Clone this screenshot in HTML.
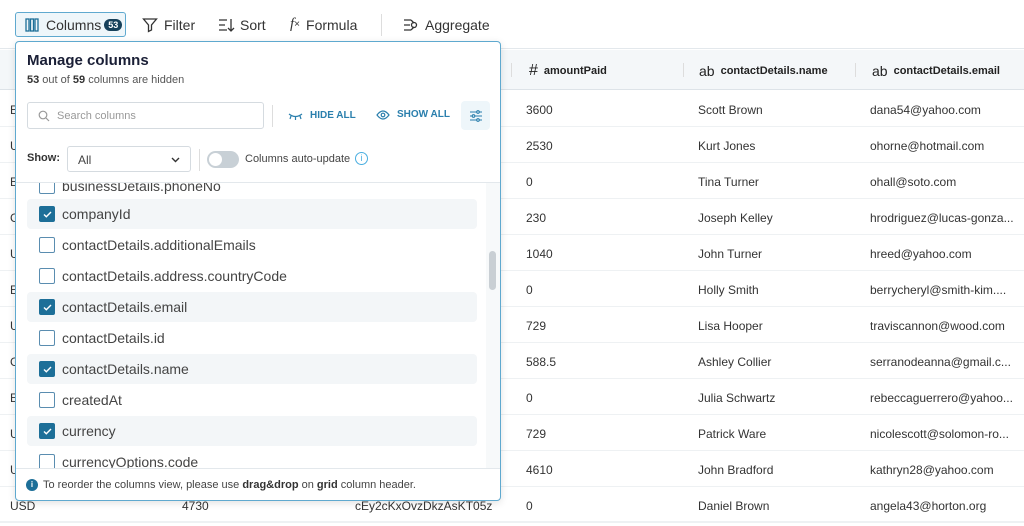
<!DOCTYPE html>
<html><head><meta charset="utf-8"><style>
*{box-sizing:border-box;margin:0;padding:0}
body{width:1024px;height:526px;overflow:hidden;background:#fff;font-family:"Liberation Sans",sans-serif;color:#222;position:relative}
.tb{position:absolute;top:0;left:0;right:0;height:49px;border-bottom:1px solid #e3e8ec}
.tbi{position:absolute;top:12px;height:25px;display:flex;align-items:center;font-size:14px;color:#333}
.hdr{position:absolute;top:50px;left:0;right:0;height:40px;background:#f4f7f9;border-bottom:1px solid #dde3e8}
.hc{position:absolute;top:1px;height:40px;display:flex;align-items:center;font-size:11px;font-weight:bold;color:#222}
.sep{position:absolute;top:13px;width:1px;height:14px;background:#ddd}
.row{position:absolute;left:0;right:0;height:36px;border-bottom:1px solid #eef1f3;font-size:12px;color:#333}
.row span{position:absolute;top:12px}
.pop{position:absolute;left:15px;top:41px;width:486px;height:460px;background:#fff;border:1px solid #5fa9cf;border-radius:4px;box-shadow:0 2px 8px rgba(0,0,0,.12);overflow:hidden}
.it{position:absolute;left:11px;width:450px;height:30px;border-radius:4px;font-size:14px;color:#444;display:flex;align-items:center}
.it.on{background:#f3f6f8}
.cb{width:16px;height:16px;border:1.5px solid #5a8db0;border-radius:2px;margin-left:12px;margin-right:7px;flex:none;display:flex;align-items:center;justify-content:center}
.on .cb{background:#1d6f98;border-color:#1d6f98}
</style></head><body>
<div class="tb">
 <div class="tbi" style="left:15px;width:111px;border:1px solid #5fa9cf;border-radius:3px;background:#eef6fa;padding-left:9px">
  <svg width="14" height="14" viewBox="0 0 14 14" fill="none" stroke="#1d6f98" stroke-width="1.3"><rect x="1" y="1" width="3" height="12"/><rect x="5.5" y="1" width="3" height="12"/><rect x="10" y="1" width="3" height="12"/></svg>
  <span style="margin-left:7px">Columns</span>
  <span style="margin-left:3px;background:#16405a;color:#fff;font-size:9px;border-radius:8px;padding:1px 4px;font-weight:bold">53</span></div>
 <div class="tbi" style="left:142px"><svg width="16" height="16" viewBox="0 0 16 16" fill="none" stroke="#333" stroke-width="1.3"><path d="M1.5 2h13l-5 6v5l-3 1.5V8z"/></svg><span style="margin-left:6px">Filter</span></div>
 <div class="tbi" style="left:218px"><svg width="17" height="14" viewBox="0 0 17 14" fill="none" stroke="#333" stroke-width="1.3"><path d="M1 2h8M1 7h6M1 12h8M13 1v12M10 10l3 3 3-3"/></svg><span style="margin-left:5px">Sort</span></div>
 <div class="tbi" style="left:290px"><span style="font-family:'Liberation Serif',serif;font-style:italic;font-size:15px">f</span><span style="font-size:10px">×</span><span style="margin-left:6px">Formula</span></div>
 <div style="position:absolute;left:381px;top:14px;width:1px;height:22px;background:#ddd"></div>
 <div class="tbi" style="left:403px"><svg width="16" height="14" viewBox="0 0 16 14" fill="none" stroke="#333" stroke-width="1.3"><path d="M1 2h7M1 7h6M1 12h7"/><circle cx="11" cy="7" r="2.5"/><path d="M8 2l3 3M8 12l3-3"/></svg><span style="margin-left:6px">Aggregate</span></div>
</div>
<div class="hdr">
 <div class="sep" style="left:511px"></div><div class="sep" style="left:683px"></div><div class="sep" style="left:855px"></div>
 <div class="hc" style="left:529px"><span style="font-size:16px;font-weight:normal;margin-right:6px">#</span>amountPaid</div>
 <div class="hc" style="left:699px"><span style="font-size:14px;font-weight:normal;margin-right:6px">ab</span>contactDetails.name</div>
 <div class="hc" style="left:872px"><span style="font-size:14px;font-weight:normal;margin-right:6px">ab</span>contactDetails.email</div>
</div>
<div class="row" style="top:91px"><span style="left:10px">EUR</span><span style="left:526px">3600</span><span style="left:698px">Scott Brown</span><span style="left:870px">dana54@yahoo.com</span></div>
<div class="row" style="top:127px"><span style="left:10px">USD</span><span style="left:526px">2530</span><span style="left:698px">Kurt Jones</span><span style="left:870px">ohorne@hotmail.com</span></div>
<div class="row" style="top:163px"><span style="left:10px">EUR</span><span style="left:526px">0</span><span style="left:698px">Tina Turner</span><span style="left:870px">ohall@soto.com</span></div>
<div class="row" style="top:199px"><span style="left:10px">GBP</span><span style="left:526px">230</span><span style="left:698px">Joseph Kelley</span><span style="left:870px">hrodriguez@lucas-gonza...</span></div>
<div class="row" style="top:235px"><span style="left:10px">USD</span><span style="left:526px">1040</span><span style="left:698px">John Turner</span><span style="left:870px">hreed@yahoo.com</span></div>
<div class="row" style="top:271px"><span style="left:10px">EUR</span><span style="left:526px">0</span><span style="left:698px">Holly Smith</span><span style="left:870px">berrycheryl@smith-kim....</span></div>
<div class="row" style="top:307px"><span style="left:10px">USD</span><span style="left:526px">729</span><span style="left:698px">Lisa Hooper</span><span style="left:870px">traviscannon@wood.com</span></div>
<div class="row" style="top:343px"><span style="left:10px">GBP</span><span style="left:526px">588.5</span><span style="left:698px">Ashley Collier</span><span style="left:870px">serranodeanna@gmail.c...</span></div>
<div class="row" style="top:379px"><span style="left:10px">EUR</span><span style="left:526px">0</span><span style="left:698px">Julia Schwartz</span><span style="left:870px">rebeccaguerrero@yahoo...</span></div>
<div class="row" style="top:415px"><span style="left:10px">USD</span><span style="left:526px">729</span><span style="left:698px">Patrick Ware</span><span style="left:870px">nicolescott@solomon-ro...</span></div>
<div class="row" style="top:451px"><span style="left:10px">USD</span><span style="left:526px">4610</span><span style="left:698px">John Bradford</span><span style="left:870px">kathryn28@yahoo.com</span></div>
<div class="row" style="top:487px;border-bottom:2px solid #eef1f3"><span style="left:10px">USD</span><span style="left:182px">4730</span><span style="left:355px">cEy2cKxOvzDkzAsKT05z</span><span style="left:526px">0</span><span style="left:698px">Daniel Brown</span><span style="left:870px">angela43@horton.org</span></div>

<div class="pop">
 <div style="position:absolute;left:11px;top:10px;font-size:15px;font-weight:bold;color:#1a1f36">Manage columns</div>
 <div style="position:absolute;left:11px;top:32px;font-size:11px;color:#555"><b style="color:#333">53</b> out of <b style="color:#333">59</b> columns are hidden</div>
 <div style="position:absolute;left:11px;top:60px;width:237px;height:27px;border:1px solid #d5dbe0;border-radius:3px;font-size:11px;color:#999;display:flex;align-items:center;padding-left:10px">
  <svg width="12" height="12" viewBox="0 0 12 12" fill="none" stroke="#999" stroke-width="1.2"><circle cx="5" cy="5" r="3.8"/><path d="M8 8l3 3"/></svg><span style="margin-left:7px">Search columns</span></div>
 <div style="position:absolute;left:256px;top:63px;width:1px;height:22px;background:#ddd"></div>
 <div style="position:absolute;left:272px;top:68px;font-size:10px;font-weight:bold;color:#2a7fad;display:flex;align-items:center"><svg width="15" height="8" viewBox="0 0 15 8" fill="none" stroke="#2a7fad" stroke-width="1.2"><path d="M1 2q6.5 5 13 0M3 4l-1 3M7.5 5v3M12 4l1 3"/></svg><span style="margin-left:7px">HIDE ALL</span></div>
 <div style="position:absolute;left:360px;top:67px;font-size:10px;font-weight:bold;color:#2a7fad;display:flex;align-items:center"><svg width="14" height="10" viewBox="0 0 14 10" fill="none" stroke="#2a7fad" stroke-width="1.2"><path d="M1 5q6-8 12 0q-6 8-12 0z"/><circle cx="7" cy="5" r="1.8"/></svg><span style="margin-left:7px">SHOW ALL</span></div>
 <div style="position:absolute;left:445px;top:59px;width:29px;height:29px;background:#eef6fa;border-radius:4px;display:flex;align-items:center;justify-content:center"><svg width="14" height="12" viewBox="0 0 14 12" fill="none" stroke="#2a7fad" stroke-width="1.1"><path d="M1 2h12M1 6h12M1 10h12"/><circle cx="9" cy="2" r="1.3" fill="#eef6fa"/><circle cx="4.5" cy="6" r="1.3" fill="#eef6fa"/><circle cx="9" cy="10" r="1.3" fill="#eef6fa"/></svg></div>
 <div style="position:absolute;left:11px;top:110px;font-size:11px;font-weight:bold;color:#333">Show:</div>
 <div style="position:absolute;left:51px;top:104px;width:124px;height:26px;border:1px solid #d5dbe0;border-radius:3px;font-size:12px;color:#444;padding:6px 10px">All<svg style="position:absolute;right:10px;top:10px" width="9" height="6" viewBox="0 0 9 6" fill="none" stroke="#333" stroke-width="1.4"><path d="M1 1l3.5 3.5L8 1"/></svg></div>
 <div style="position:absolute;left:183px;top:107px;width:1px;height:22px;background:#ddd"></div>
 <div style="position:absolute;left:191px;top:109px;width:32px;height:17px;border-radius:9px;background:#c8d0d6"><div style="position:absolute;left:2px;top:2px;width:13px;height:13px;border-radius:50%;background:#fff"></div></div>
 <div style="position:absolute;left:229px;top:111px;font-size:11px;color:#444">Columns auto-update</div>
 <div style="position:absolute;left:339px;top:110px;width:13px;height:13px;border:1px solid #4aaee0;border-radius:50%;font-size:9px;color:#4aaee0;text-align:center;line-height:11px">i</div>
 <div style="position:absolute;left:0;top:140px;width:484px;height:1px;background:#e3e8ec"></div>
 <div style="position:absolute;left:0;top:141px;width:470px;height:285px;overflow:hidden">
  <div class="it" style="top:-12px"><div class="cb"></div>businessDetails.phoneNo</div>
  <div class="it on" style="top:16px"><div class="cb"><svg width="9" height="7" viewBox="0 0 9 7" fill="none" stroke="#fff" stroke-width="1.4"><path d="M1 3.5l2.3 2.3L8 1"/></svg></div>companyId</div>
  <div class="it" style="top:47px"><div class="cb"></div>contactDetails.additionalEmails</div>
  <div class="it" style="top:78px"><div class="cb"></div>contactDetails.address.countryCode</div>
  <div class="it on" style="top:109px"><div class="cb"><svg width="9" height="7" viewBox="0 0 9 7" fill="none" stroke="#fff" stroke-width="1.4"><path d="M1 3.5l2.3 2.3L8 1"/></svg></div>contactDetails.email</div>
  <div class="it" style="top:140px"><div class="cb"></div>contactDetails.id</div>
  <div class="it on" style="top:171px"><div class="cb"><svg width="9" height="7" viewBox="0 0 9 7" fill="none" stroke="#fff" stroke-width="1.4"><path d="M1 3.5l2.3 2.3L8 1"/></svg></div>contactDetails.name</div>
  <div class="it" style="top:202px"><div class="cb"></div>createdAt</div>
  <div class="it on" style="top:233px"><div class="cb"><svg width="9" height="7" viewBox="0 0 9 7" fill="none" stroke="#fff" stroke-width="1.4"><path d="M1 3.5l2.3 2.3L8 1"/></svg></div>currency</div>
  <div class="it" style="top:264px"><div class="cb"></div>currencyOptions.code</div>
 </div>
 <div style="position:absolute;left:470px;top:141px;width:14px;height:285px;background:#f7f9fa"><div style="position:absolute;left:3px;top:68px;width:7px;height:39px;border-radius:4px;background:#c9cfd4"></div></div>
 <div style="position:absolute;left:0;top:426px;width:484px;height:1px;background:#e3e8ec"></div>
 <div style="position:absolute;left:10px;top:437px;font-size:11px;color:#444;display:flex;align-items:center"><span style="width:12px;height:12px;border-radius:50%;background:#1d6f98;color:#fff;font-size:8px;font-weight:bold;text-align:center;line-height:12px;margin-right:5px">i</span>To reorder the columns view, please use&nbsp;<b style="color:#333">drag&amp;drop</b>&nbsp;on&nbsp;<b style="color:#333">grid</b>&nbsp;column header.</div>
</div>
</body></html>
